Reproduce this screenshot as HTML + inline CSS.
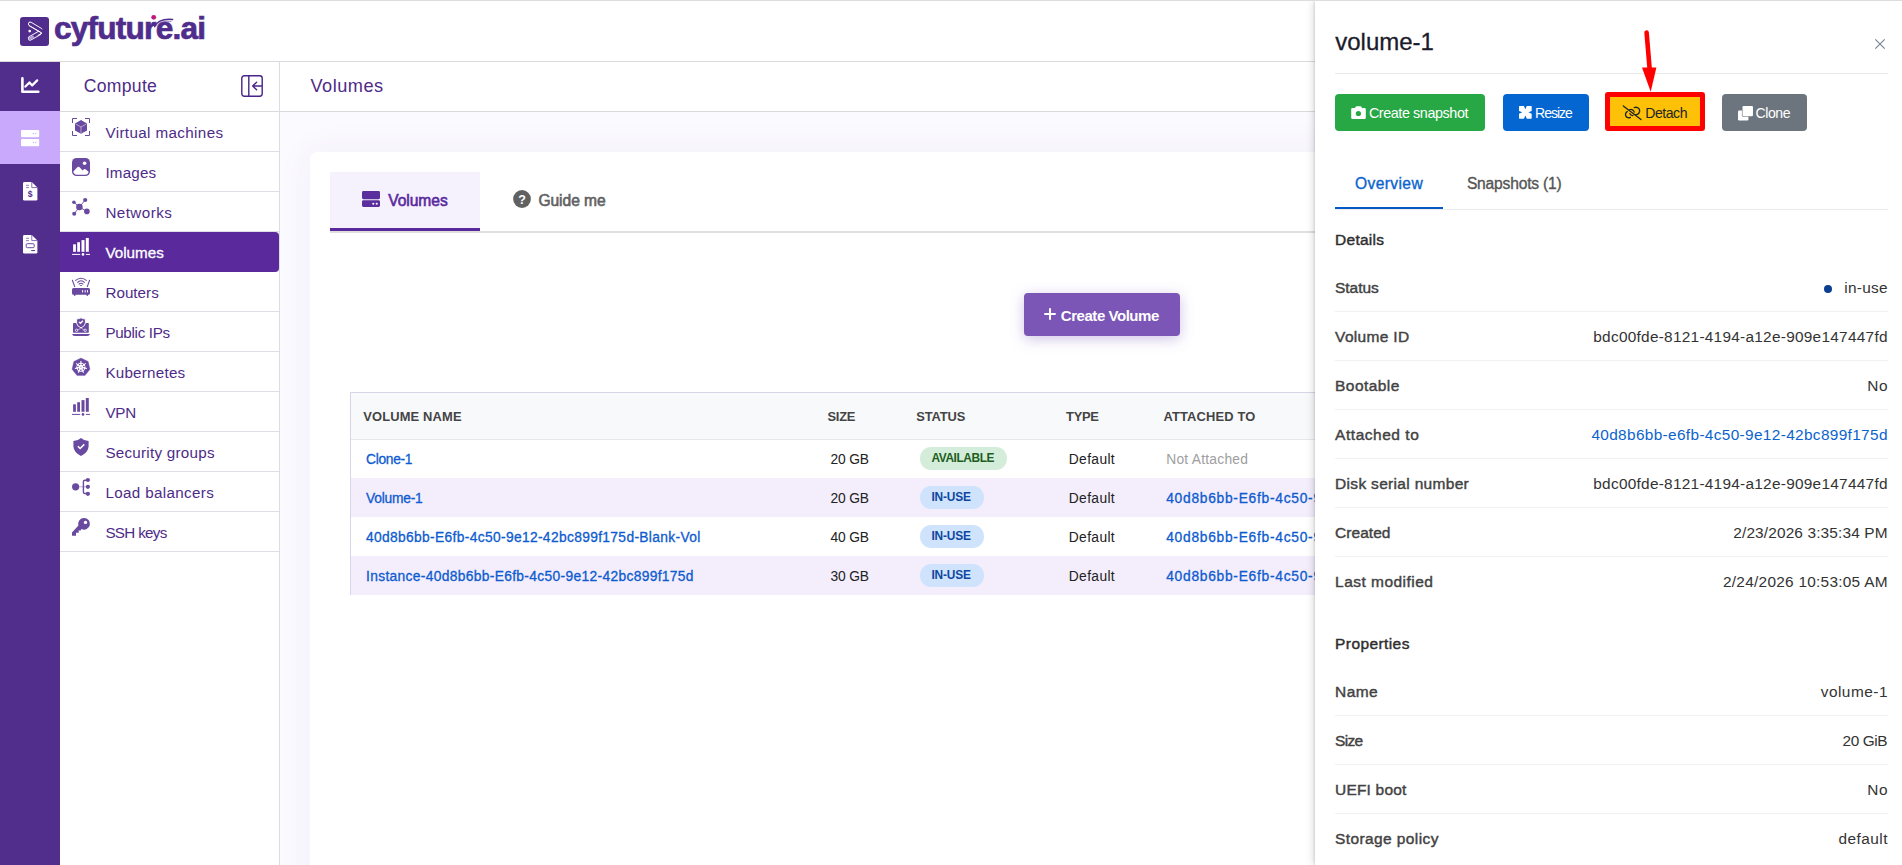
<!DOCTYPE html>
<html lang="en">
<head>
<meta charset="utf-8">
<title>Volumes</title>
<style>
*{box-sizing:border-box;margin:0;padding:0}
html,body{width:1902px;height:865px;overflow:hidden;background:#fff}
body{font-family:"Liberation Sans",sans-serif;color:#222;position:relative}
.a{position:absolute}
.t{position:absolute;white-space:nowrap;line-height:1}
svg{position:absolute;overflow:visible}
#topline{left:0;top:0;width:1902px;height:1px;background:#dcdddc;z-index:5}
#topbar{left:0;top:1px;width:1902px;height:61px;background:#fff;border-bottom:1px solid #d9d9de}
#rail{left:0;top:62px;width:60px;height:803px;background:#512d8c}
#railact{left:0;top:111px;width:60px;height:53px;background:#c9a9fb}
#side{left:60px;top:62px;width:220px;height:803px;background:#fff;border-right:1px solid #dcdce4}
#sidehd{left:60px;top:62px;width:219px;height:50px;border-bottom:1px solid #d9d9de}
.mi{position:absolute;left:60px;width:219px;height:40px;border-bottom:1px solid #dedee8}
.mi.on{background:#5a2a9d;border-bottom:none;border-radius:0 4px 4px 0}
#main{left:280px;top:62px;width:1622px;height:803px;background:#fbfafe}
#mainhd{left:280px;top:62px;width:1622px;height:50px;background:#fff;border-bottom:1px solid #d9d9de}
#card{left:310px;top:152px;width:1592px;height:760px;background:#fff;border-radius:8px 0 0 0;box-shadow:0 0 34px 2px rgba(80,50,150,.05)}
#tabline{left:330px;top:231px;width:1000px;height:2px;background:#dfdfdf}
#tab1{left:330px;top:172px;width:150px;height:59px;background:#f6f2fd;border-bottom:3px solid #5a2a9d}
#cbtn{left:1024px;top:293px;width:156px;height:43px;background:#7b56b6;border-radius:4px;box-shadow:0 3px 14px rgba(123,86,182,.35)}
#tbl{left:350px;top:392px;width:980px;height:203px;border-left:1px solid #d9d4ea;border-top:1px solid #d9d4ea}
#thead{left:351px;top:393px;width:980px;height:46px;background:#f8f9fb}
#thline{left:351px;top:439px;width:980px;height:1px;background:#e6e8ee}
.row{position:absolute;left:351px;width:980px;height:39px}
.row.alt{background:#f3edfc}
.bdg{position:absolute;height:22.4px;border-radius:11.2px}
#panel{left:1315px;top:1px;width:587px;height:864px;background:#fff;box-shadow:-1px 0 2px rgba(0,0,0,.10),-2px 0 8px rgba(0,0,0,.13);clip-path:inset(0 0 0 -14px)}
.hr{position:absolute;left:1335px;width:553px;height:1px;background:#f1f1f1}
.btn{position:absolute;height:37px;border-radius:4px}
</style>
</head>
<body>
<div id="topline" class="a"></div>
<div id="topbar" class="a"></div>

<svg class="a" style="left:20px;top:17px" width="29" height="29" viewBox="0 0 29 29"><rect width="29" height="29" rx="3" fill="#502d8d"/><path d="M10.2 21.3 L19.4 15.9" fill="none" stroke="#fff" stroke-width="4.6" stroke-linecap="round"/><path d="M10.2 21.3 L19.4 15.9" fill="none" stroke="#502d8d" stroke-width="2.9" stroke-linecap="round"/><path d="M10.2 21.3 L12.6 19.9" fill="none" stroke="#b9a0dc" stroke-width="2.8" stroke-linecap="round"/><path d="M10.3 6.9 L20.3 12.9" fill="none" stroke="#fff" stroke-width="4.6" stroke-linecap="round"/><path d="M10.3 6.9 L22.6 14.3" fill="none" stroke="#502d8d" stroke-width="2.9" stroke-linecap="round"/><path d="M9.2 8.8 L21.8 16.2 L18 18.3" fill="none" stroke="#fff" stroke-width=".9" stroke-linecap="round" stroke-linejoin="round"/><circle cx="9.7" cy="14.1" r="1.35" fill="#fff"/></svg><svg class="a" style="left:140px;top:12px" width="30" height="16" viewBox="0 0 30 16"><circle cx="13.7" cy="5.3" r="2.4" fill="#c2187a"/><path d="M14.6 14.6 C17 9.5 23 6.6 32.6 7.4" fill="none" stroke="#502d8d" stroke-width="1.5" stroke-linecap="round"/><path d="M17.5 13 C20 10.2 25 8.6 31 9.4" fill="none" stroke="#8a6bc0" stroke-width=".9" stroke-linecap="round"/></svg>
<span class="t" style="left:53.9px;top:12.7px;font-size:31.6px;font-weight:700;color:#502d8d;letter-spacing:-0.758px;-webkit-text-stroke:.7px #502d8d">cyfuture.ai</span>
<div id="rail" class="a"></div><div id="railact" class="a"></div>
<svg class="a" style="left:14px;top:70px" width="32" height="32" viewBox="0 0 32 32"><path d="M8.4 8.3 V21.8 H24.3" fill="none" stroke="#fff" stroke-width="2.6" stroke-linecap="round" stroke-linejoin="round"/><path d="M11.4 16.6 L15.5 12.4 L18.2 15.4 L23.2 10.4" fill="none" stroke="#fff" stroke-width="2.2" stroke-linecap="round" stroke-linejoin="round"/></svg><svg class="a" style="left:21px;top:130px" width="18.2" height="16.2" viewBox="0 0 18.2 16.2"><rect x="0" y="0" width="18.2" height="7.2" rx="1" fill="#fff"/><rect x="0" y="9" width="18.2" height="7.2" rx="1" fill="#fff"/><circle cx="12.5" cy="3.6" r=".7" fill="#c9a9fb"/><circle cx="14.7" cy="3.6" r=".7" fill="#c9a9fb"/><circle cx="12.5" cy="12.6" r=".7" fill="#c9a9fb"/><circle cx="14.7" cy="12.6" r=".7" fill="#c9a9fb"/></svg><svg class="a" style="left:23px;top:181.8px" width="14.4" height="18.6" viewBox="0 0 14.4 18.6"><path d="M1.4 0 H8.8 L14.4 5.6 V17.2 Q14.4 18.6 13 18.6 H1.4 Q0 18.6 0 17.2 V1.4 Q0 0 1.4 0Z" fill="#fff"/><path d="M8.8 0 V5.6 H14.4" fill="none" stroke="#7b5ab0" stroke-width=".9"/><path d="M3 3.3 H6 M3 5.6 H6" stroke="#7b5ab0" stroke-width=".8"/><text x="7.2" y="15.4" font-family="Liberation Sans, sans-serif" font-weight="700" font-size="8.6" fill="#512d8c" text-anchor="middle">$</text></svg><svg class="a" style="left:23px;top:234.9px" width="14.4" height="18.6" viewBox="0 0 14.4 18.6"><path d="M1.4 0 H8.8 L14.4 5.6 V17.2 Q14.4 18.6 13 18.6 H1.4 Q0 18.6 0 17.2 V1.4 Q0 0 1.4 0Z" fill="#fff"/><path d="M8.8 0 V5.6 H14.4" fill="none" stroke="#7b5ab0" stroke-width=".9"/><path d="M3 3.3 H6 M3 5.6 H6" stroke="#7b5ab0" stroke-width=".8"/><rect x="3.2" y="8.7" width="8" height="4" rx="1" fill="none" stroke="#6a4aa8" stroke-width="1"/><path d="M8.6 15.6 H11.6" stroke="#512d8c" stroke-width="1" stroke-linecap="round"/></svg>
<div id="side" class="a"></div><div id="sidehd" class="a"></div>
<span class="t" style="left:83.8px;top:77.5px;font-size:17.6px;font-weight:400;color:#4e2b88;letter-spacing:0.285px;">Compute</span>
<svg class="a" style="left:241px;top:75px" width="22" height="22" viewBox="0 0 22 22"><rect x=".8" y=".8" width="20.4" height="20.4" rx="2.4" fill="none" stroke="#4a2488" stroke-width="1.4"/><path d="M7.8 .8 V21.2" stroke="#4a2488" stroke-width="1.4"/><path d="M20.6 11 H11.8 M15.6 7.2 L11.7 11 L15.6 14.8" fill="none" stroke="#4a2488" stroke-width="1.4" stroke-linecap="round" stroke-linejoin="round"/></svg>
<div class="mi" style="top:112px"></div>
<svg class="a" style="left:72px;top:118px" width="18" height="18" viewBox="0 0 18 18"><path d="M.5 5 V.5 H5 M13 .5 H17.5 V5 M17.5 13 V17.5 H13 M5 17.5 H.5 V13" fill="none" stroke="#6a4aa0" stroke-width="1"/><path d="M9 2 L15 5.4 V12.4 L9 15.8 L3 12.4 V5.4Z" fill="#6a4aa0"/><path d="M3.6 6 L9 9 L14.4 6 M9 9 V15.2" fill="none" stroke="#fff" stroke-opacity=".55" stroke-width=".9"/></svg>
<span class="t" style="left:105.4px;top:125.1px;font-size:15.2px;font-weight:400;color:#4e2b88;letter-spacing:0.380px;">Virtual machines</span>
<div class="mi" style="top:152px"></div>
<svg class="a" style="left:72px;top:158px" width="18" height="18" viewBox="0 0 18 18"><rect width="18" height="18" rx="4.6" fill="#6a4aa0"/><circle cx="12.6" cy="5.2" r="1.8" fill="#fff"/><path d="M1.3 13.6 L5.6 9.1 Q6.6 8.2 7.6 9.2 L10.6 12.4 L11.9 11.3 Q12.9 10.5 13.9 11.4 L16.6 13.8 Q16.2 16.7 13.2 16.7 H4.8 Q1.7 16.7 1.3 13.6Z" fill="#fff"/></svg>
<span class="t" style="left:105.4px;top:165.1px;font-size:15.2px;font-weight:400;color:#4e2b88;letter-spacing:0.198px;">Images</span>
<div class="mi" style="top:192px"></div>
<svg class="a" style="left:72px;top:198px" width="18" height="18" viewBox="0 0 18 18"><path d="M7.4 9 L13.2 1.9 M7.4 9 L1.9 4.2 M7.4 9 L2.2 15.8 M7.4 9 L14.9 13.4" stroke="#6a4aa0" stroke-width=".9"/><circle cx="7.4" cy="9" r="3.3" fill="#6a4aa0"/><circle cx="13.2" cy="2" r="2.1" fill="#6a4aa0"/><circle cx="1.9" cy="4.2" r="1.8" fill="#6a4aa0"/><circle cx="2.2" cy="15.8" r="2" fill="#6a4aa0"/><circle cx="14.9" cy="13.4" r="2.8" fill="#6a4aa0"/></svg>
<span class="t" style="left:105.4px;top:205.1px;font-size:15.2px;font-weight:400;color:#4e2b88;letter-spacing:0.443px;">Networks</span>
<div class="mi on" style="top:232px"></div>
<svg class="a" style="left:72px;top:238px" width="18" height="18" viewBox="0 0 18 18"><rect x="1.1" y="6.3" width="2.8" height="7.5" fill="#fff"/><rect x="5.2" y="4.2" width="2.8" height="9.6" fill="#fff"/><rect x="9.5" y="2.1" width="3" height="11.7" fill="#fff"/><rect x="13.8" y="0" width="3" height="13.8" fill="#fff"/><path d="M0 16.4 H8.2 M13.9 16.4 H18" stroke="#fff" stroke-width="1"/><circle cx="11" cy="16.4" r="1.3" fill="#fff"/></svg>
<span class="t" style="left:105.4px;top:245.1px;font-size:15.2px;font-weight:400;color:#fff;letter-spacing:0.022px;-webkit-text-stroke:.3px #fff">Volumes</span>
<div class="mi" style="top:272px"></div>
<svg class="a" style="left:72px;top:278px" width="18" height="18" viewBox="0 0 18 18"><path d="M1.5 9.9 H16.5 Q18 9.9 18 11.4 V15.2 Q18 16.7 16.5 16.7 H16.2 L15.6 17.9 H14.8 L14.4 16.7 H3.6 L3.2 17.9 H2.4 L1.8 16.7 H1.5 Q0 16.7 0 15.2 V11.4 Q0 9.9 1.5 9.9Z" fill="#6a4aa0"/><path d="M10.6 12.2 V14.4 M13.2 12.2 V14.4 M15.5 12.2 V14.4" stroke="#fff" stroke-width="1"/><path d="M.4 2.2 L2.7 8.6 M17.6 2.2 L15.3 8.6" stroke="#6a4aa0" stroke-width="1.1" stroke-linecap="round"/><path d="M3.3 2.7 Q9 -2.2 14.7 2.7 M5.3 4.6 Q9 .9 12.7 4.6 M6.7 6.3 Q9 4.3 11.3 6.3" fill="none" stroke="#6a4aa0" stroke-width="1.1"/><ellipse cx="9" cy="7.5" rx="1.1" ry=".6" fill="#6a4aa0"/></svg>
<span class="t" style="left:105.4px;top:285.1px;font-size:15.2px;font-weight:400;color:#4e2b88;letter-spacing:0.035px;">Routers</span>
<div class="mi" style="top:312px"></div>
<svg class="a" style="left:72px;top:318px" width="18" height="18" viewBox="0 0 18 18"><rect x="1" y="5" width="15.8" height="9.7" rx=".6" fill="#6a4aa0"/><path d="M0 15.9 H18 Q17.4 17.9 15.4 17.9 H2.6 Q.6 17.9 0 15.9Z" fill="#6a4aa0"/><path d="M9 -.2 Q11 .9 13.4 1 V5 Q13.2 8.2 9 9.8 Q4.8 8.2 4.6 5 V1 Q7 .9 9 -.2Z" fill="#6a4aa0" stroke="#fff" stroke-width=".9"/><path d="M7 3.9 L8.4 5.3 L10.9 2.7" fill="none" stroke="#fff" stroke-width="1.3"/><path d="M9 9.8 L5.8 12.2 M9 9.8 L12.2 12.2" stroke="#fff" stroke-width=".7" stroke-opacity=".8"/><circle cx="4.6" cy="12.3" r="1.2" fill="none" stroke="#fff" stroke-width=".8"/><circle cx="13.2" cy="12.3" r="1.2" fill="none" stroke="#fff" stroke-width=".8"/></svg>
<span class="t" style="left:105.4px;top:325.1px;font-size:15.2px;font-weight:400;color:#4e2b88;letter-spacing:-0.303px;">Public IPs</span>
<div class="mi" style="top:352px"></div>
<svg class="a" style="left:72px;top:358px" width="18" height="18" viewBox="0 0 18 18"><path d="M9 0 L16.2 3.5 L18 11.3 L13 17.6 H5 L0 11.3 L1.8 3.5Z" fill="#6a4aa0" stroke="#6a4aa0" stroke-width=".3" stroke-linejoin="round"/><circle cx="8.9" cy="9.2" r="4.5" fill="#fff"/><path d="M8.90 6.20 L8.90 3.10 M11.25 7.33 L13.67 5.40 M11.82 9.87 L14.85 10.56 M10.20 11.90 L11.55 14.70 M7.60 11.90 L6.25 14.70 M5.98 9.87 L2.95 10.56 M6.55 7.33 L4.13 5.40 " stroke="#fff" stroke-width="1.1"/><circle cx="8.90" cy="12.25" r=".8" fill="#6a4aa0"/><circle cx="6.52" cy="11.10" r=".8" fill="#6a4aa0"/><circle cx="5.93" cy="8.52" r=".8" fill="#6a4aa0"/><circle cx="7.58" cy="6.45" r=".8" fill="#6a4aa0"/><circle cx="10.22" cy="6.45" r=".8" fill="#6a4aa0"/><circle cx="11.87" cy="8.52" r=".8" fill="#6a4aa0"/><circle cx="11.28" cy="11.10" r=".8" fill="#6a4aa0"/><circle cx="8.9" cy="9.2" r=".7" fill="#6a4aa0" fill-opacity=".45"/></svg>
<span class="t" style="left:105.4px;top:365.1px;font-size:15.2px;font-weight:400;color:#4e2b88;letter-spacing:0.235px;">Kubernetes</span>
<div class="mi" style="top:392px"></div>
<svg class="a" style="left:72px;top:398px" width="18" height="18" viewBox="0 0 18 18"><rect x="1.1" y="6.3" width="2.8" height="7.5" fill="#6a4aa0"/><rect x="5.2" y="4.2" width="2.8" height="9.6" fill="#6a4aa0"/><rect x="9.5" y="2.1" width="3" height="11.7" fill="#6a4aa0"/><rect x="13.8" y="0" width="3" height="13.8" fill="#6a4aa0"/><path d="M0 16.4 H8.2 M13.9 16.4 H18" stroke="#6a4aa0" stroke-width="1"/><circle cx="11" cy="16.4" r="1.3" fill="#6a4aa0"/></svg>
<span class="t" style="left:105.4px;top:405.1px;font-size:15.2px;font-weight:400;color:#4e2b88;letter-spacing:-0.217px;">VPN</span>
<div class="mi" style="top:432px"></div>
<svg class="a" style="left:72px;top:438px" width="18" height="18" viewBox="0 0 18 18"><path d="M9 0 Q11.5 2.3 16.6 3 V8.6 Q16.2 14.6 9 18 Q1.8 14.6 1.4 8.6 V3 Q6.5 2.3 9 0Z" fill="#6a4aa0"/><path d="M5.9 8.3 L8.1 10.5 L12.3 6.4" fill="none" stroke="#fff" stroke-width="1.5"/></svg>
<span class="t" style="left:105.4px;top:445.1px;font-size:15.2px;font-weight:400;color:#4e2b88;letter-spacing:0.255px;">Security groups</span>
<div class="mi" style="top:472px"></div>
<svg class="a" style="left:72px;top:478px" width="18" height="18" viewBox="0 0 18 18"><circle cx="3.6" cy="8.8" r="3.6" fill="#6a4aa0"/><circle cx="15.9" cy="2" r="2.1" fill="#6a4aa0"/><circle cx="15.9" cy="8.8" r="2.1" fill="#6a4aa0"/><circle cx="15.9" cy="15.8" r="2.1" fill="#6a4aa0"/><path d="M15 2.2 H13 Q11.4 2.2 11.4 3.8 V13.9 Q11.4 15.5 13 15.5 H15" fill="none" stroke="#6a4aa0" stroke-width="1.4"/><path d="M7 8.8 H15" stroke="#6a4aa0" stroke-width=".9" stroke-opacity=".5"/></svg>
<span class="t" style="left:105.4px;top:485.1px;font-size:15.2px;font-weight:400;color:#4e2b88;letter-spacing:0.349px;">Load balancers</span>
<div class="mi" style="top:512px"></div>
<svg class="a" style="left:72px;top:518px" width="18" height="18" viewBox="0 0 18 18"><path d="M11.9 0 A5.8 5.8 0 1 1 9.6 11 L8.6 12.6 H6.7 V14.8 H4 V17.8 H0 V14.6 L6.4 7.6 A5.8 5.8 0 0 1 11.9 0Z M13.5 2.7 A1.7 1.7 0 1 0 13.5 6.1 A1.7 1.7 0 1 0 13.5 2.7Z" fill="#6a4aa0" fill-rule="evenodd"/></svg>
<span class="t" style="left:105.4px;top:525.1px;font-size:15.2px;font-weight:400;color:#4e2b88;letter-spacing:-0.670px;">SSH keys</span>
<div id="main" class="a"></div><div id="mainhd" class="a"></div>
<span class="t" style="left:310.5px;top:77.3px;font-size:18.2px;font-weight:400;color:#4e2b88;letter-spacing:0.472px;">Volumes</span>
<div id="card" class="a"></div>
<div id="tabline" class="a"></div><div id="tab1" class="a"></div>
<svg class="a" style="left:362px;top:191px" width="18" height="16" viewBox="0 0 18 16"><rect x="0" y="0" width="18" height="8.2" rx="1.4" fill="#5a2e9c"/><rect x="0" y="9.3" width="18" height="6.6" rx="1.4" fill="#5a2e9c"/><circle cx="11.3" cy="12.7" r="1.05" fill="#fff"/><circle cx="14.7" cy="12.7" r="1.05" fill="#fff"/></svg>
<span class="t" style="left:388.3px;top:192.8px;font-size:15.6px;font-weight:400;color:#5a2a9d;letter-spacing:-0.069px;-webkit-text-stroke:.6px #5a2a9d">Volumes</span>
<svg class="a" style="left:512.5px;top:190px" width="18" height="18" viewBox="0 0 18 18"><circle cx="9" cy="9" r="8.9" fill="#616161"/><text x="9" y="13.5" font-family="Liberation Sans, sans-serif" font-weight="700" font-size="12.5" fill="#fff" text-anchor="middle">?</text></svg>
<span class="t" style="left:538.4px;top:192.8px;font-size:15.6px;font-weight:400;color:#616161;letter-spacing:-0.044px;-webkit-text-stroke:.6px #616161">Guide me</span>
<div id="cbtn" class="a"></div>
<svg class="a" style="left:1044px;top:308.4px" width="12" height="12" viewBox="0 0 12 12"><path d="M6 .3 V11.7 M.3 6 H11.7" stroke="#fff" stroke-width="2"/></svg>
<span class="t" style="left:1060.8px;top:307.6px;font-size:15px;font-weight:700;color:#fff;letter-spacing:-0.453px;">Create Volume</span>
<div id="tbl" class="a"></div><div id="thead" class="a"></div>
<span class="t" style="left:363.2px;top:410.5px;font-size:12.9px;font-weight:700;color:#444;letter-spacing:0.161px;">VOLUME NAME</span>
<span class="t" style="left:827.5px;top:410.5px;font-size:12.9px;font-weight:700;color:#444;letter-spacing:-0.252px;">SIZE</span>
<span class="t" style="left:916.2px;top:410.5px;font-size:12.9px;font-weight:700;color:#444;letter-spacing:-0.111px;">STATUS</span>
<span class="t" style="left:1066.1px;top:410.5px;font-size:12.9px;font-weight:700;color:#444;letter-spacing:-0.291px;">TYPE</span>
<span class="t" style="left:1163.5px;top:410.5px;font-size:12.9px;font-weight:700;color:#444;letter-spacing:0.147px;">ATTACHED TO</span>
<div class="row" style="top:439px"></div>
<span class="t" style="left:366.0px;top:452.5px;font-size:13.8px;font-weight:400;color:#0d5bcf;letter-spacing:-0.305px;-webkit-text-stroke:.3px #0d5bcf">Clone-1</span>
<span class="t" style="left:830.5px;top:452.5px;font-size:13.8px;font-weight:400;color:#222;letter-spacing:-0.156px;">20 GB</span>
<div class="bdg" style="left:920px;top:447.3px;width:87px;background:#d4edda"></div>
<span class="t" style="left:931.5px;top:453.2px;font-size:11.9px;font-weight:700;color:#1b5e20;letter-spacing:-0.410px;">AVAILABLE</span>
<span class="t" style="left:1068.8px;top:452.5px;font-size:13.8px;font-weight:400;color:#222;letter-spacing:0.364px;">Default</span>
<span class="t" style="left:1166.2px;top:452.5px;font-size:13.8px;font-weight:400;color:#9e9e9e;letter-spacing:0.253px;">Not Attached</span>
<div class="row alt" style="top:478px"></div>
<span class="t" style="left:366.0px;top:491.5px;font-size:13.8px;font-weight:400;color:#0d5bcf;letter-spacing:-0.214px;-webkit-text-stroke:.3px #0d5bcf">Volume-1</span>
<span class="t" style="left:830.5px;top:491.5px;font-size:13.8px;font-weight:400;color:#222;letter-spacing:-0.156px;">20 GB</span>
<div class="bdg" style="left:920px;top:486.3px;width:64px;background:#cfe4fc"></div>
<span class="t" style="left:931.5px;top:492.2px;font-size:11.9px;font-weight:700;color:#0d47a1;letter-spacing:-0.183px;">IN-USE</span>
<span class="t" style="left:1068.8px;top:491.5px;font-size:13.8px;font-weight:400;color:#222;letter-spacing:0.364px;">Default</span>
<span class="t" style="left:1166.2px;top:491.5px;font-size:13.8px;font-weight:400;color:#0d5bcf;letter-spacing:0.724px;-webkit-text-stroke:.3px #0d5bcf">40d8b6bb-E6fb-4c50-9e12-42bc899f175d</span>
<div class="row" style="top:517px"></div>
<span class="t" style="left:366.0px;top:530.5px;font-size:13.8px;font-weight:400;color:#0d5bcf;letter-spacing:0.338px;-webkit-text-stroke:.3px #0d5bcf">40d8b6bb-E6fb-4c50-9e12-42bc899f175d-Blank-Vol</span>
<span class="t" style="left:830.5px;top:530.5px;font-size:13.8px;font-weight:400;color:#222;letter-spacing:-0.156px;">40 GB</span>
<div class="bdg" style="left:920px;top:525.3px;width:64px;background:#cfe4fc"></div>
<span class="t" style="left:931.5px;top:531.2px;font-size:11.9px;font-weight:700;color:#0d47a1;letter-spacing:-0.183px;">IN-USE</span>
<span class="t" style="left:1068.8px;top:530.5px;font-size:13.8px;font-weight:400;color:#222;letter-spacing:0.364px;">Default</span>
<span class="t" style="left:1166.2px;top:530.5px;font-size:13.8px;font-weight:400;color:#0d5bcf;letter-spacing:0.724px;-webkit-text-stroke:.3px #0d5bcf">40d8b6bb-E6fb-4c50-9e12-42bc899f175d</span>
<div class="row alt" style="top:556px"></div>
<span class="t" style="left:366.0px;top:569.5px;font-size:13.8px;font-weight:400;color:#0d5bcf;letter-spacing:0.330px;-webkit-text-stroke:.3px #0d5bcf">Instance-40d8b6bb-E6fb-4c50-9e12-42bc899f175d</span>
<span class="t" style="left:830.5px;top:569.5px;font-size:13.8px;font-weight:400;color:#222;letter-spacing:-0.156px;">30 GB</span>
<div class="bdg" style="left:920px;top:564.3px;width:64px;background:#cfe4fc"></div>
<span class="t" style="left:931.5px;top:570.2px;font-size:11.9px;font-weight:700;color:#0d47a1;letter-spacing:-0.183px;">IN-USE</span>
<span class="t" style="left:1068.8px;top:569.5px;font-size:13.8px;font-weight:400;color:#222;letter-spacing:0.364px;">Default</span>
<span class="t" style="left:1166.2px;top:569.5px;font-size:13.8px;font-weight:400;color:#0d5bcf;letter-spacing:0.724px;-webkit-text-stroke:.3px #0d5bcf">40d8b6bb-E6fb-4c50-9e12-42bc899f175d</span>
<div id="thline" class="a"></div>
<div id="panel" class="a"></div>
<span class="t" style="left:1335.3px;top:29.7px;font-size:24px;font-weight:400;color:#1b1b2b;letter-spacing:-0.017px;-webkit-text-stroke:.3px #1b1b2b">volume-1</span>
<svg class="a" style="left:1875px;top:38.6px" width="10" height="10" viewBox="0 0 10 10"><path d="M.3 .3 L9.7 9.7 M9.7 .3 L.3 9.7" stroke="#7a8594" stroke-width="1.2"/></svg>
<div class="hr" style="top:73px;background:#e9e9e9"></div>
<div class="btn" style="left:1335px;top:94px;width:150px;background:#28a745"></div>
<svg class="a" style="left:1351px;top:106px" width="15" height="13" viewBox="0 0 15 13"><path d="M1.4 2 H4 L4.8 .6 Q5.1 .2 5.7 .2 H9.3 Q9.9 .2 10.2 .6 L11 2 H13.6 Q14.8 2 14.8 3.2 V11.8 Q14.8 13 13.6 13 H1.4 Q.2 13 .2 11.8 V3.2 Q.2 2 1.4 2Z M7.4 4.9 A2.6 2.6 0 1 0 7.4 10.1 A2.6 2.6 0 1 0 7.4 4.9Z" fill="#fff" fill-rule="evenodd"/></svg>
<span class="t" style="left:1368.9px;top:106.1px;font-size:14.4px;font-weight:400;color:#fff;letter-spacing:-0.429px;">Create snapshot</span>
<div class="btn" style="left:1503px;top:94px;width:86px;background:#0466d1"></div>
<svg class="a" style="left:1519px;top:106.3px" width="12.7" height="12.7" viewBox="0 0 12.7 12.7"><path d="M.6 0 H4.9 L6.35 3.3 L7.8 0 H12.1 Q12.7 0 12.7 .6 V4.9 L9.4 6.35 L12.7 7.8 V12.1 Q12.7 12.7 12.1 12.7 H7.8 L6.35 9.4 L4.9 12.7 H.6 Q0 12.7 0 12.1 V7.8 L3.3 6.35 L0 4.9 V.6 Q0 0 .6 0Z" fill="#fff"/></svg>
<span class="t" style="left:1535.1px;top:106.4px;font-size:14px;font-weight:400;color:#fff;letter-spacing:-1.019px;">Resize</span>
<div class="a" style="left:1605px;top:92px;width:100px;height:39px;border:5px solid #ff0000;border-radius:3px;background:#ffc107"></div>
<svg class="a" style="left:1622px;top:104px" width="20" height="17" viewBox="0 0 20 17"><path d="M1.3 2 L19 15.6" stroke="#212529" stroke-width="1.3" stroke-linecap="round"/><path d="M5.2 7.6 A3.3 3.3 0 1 0 8.4 13.4" fill="none" stroke="#212529" stroke-width="1.4" stroke-linecap="round"/><path d="M12.3 3.6 A3.7 3.7 0 1 1 13.6 10.6" fill="none" stroke="#212529" stroke-width="1.4" stroke-linecap="round"/><path d="M7.6 5.8 A3.2 3.2 0 0 1 12.2 8.2 M11 11.6 A3.2 3.2 0 0 1 7.8 9.6" fill="none" stroke="#212529" stroke-width="1.3" stroke-linecap="round"/></svg>
<span class="t" style="left:1645.2px;top:106.4px;font-size:14.1px;font-weight:400;color:#212529;letter-spacing:-0.471px;">Detach</span>
<div class="btn" style="left:1722px;top:94px;width:85px;background:#6c757d"></div>
<svg class="a" style="left:1737.5px;top:105.5px" width="15" height="14.5" viewBox="0 0 15 14.5"><rect x="0" y="4.5" width="10.4" height="10" rx="1.2" fill="#fff"/><rect x="3.9" y="-.6" width="11.7" height="11.4" rx="1.6" fill="#6c757d"/><rect x="4.5" y="0" width="10.5" height="10.2" rx="1.2" fill="#fff"/></svg>
<span class="t" style="left:1755.5px;top:106.4px;font-size:14.1px;font-weight:400;color:#fff;letter-spacing:-0.457px;">Clone</span>
<svg class="a" style="left:1636px;top:26px" width="30" height="70" viewBox="0 0 30 70"><path d="M10.6 6.6 L13.9 46" stroke="#ff0000" stroke-width="4.6" stroke-linecap="round"/><path d="M6 41.4 L20.4 41.4 L14.7 65.8Z" fill="#ff0000"/></svg>
<div class="hr" style="top:209px;background:#ececec"></div>
<div class="a" style="left:1335px;top:207px;width:108px;height:2px;background:#0558c8"></div>
<span class="t" style="left:1355.0px;top:175.6px;font-size:15.6px;font-weight:400;color:#0b63ce;letter-spacing:0.386px;-webkit-text-stroke:.35px #0b63ce">Overview</span>
<span class="t" style="left:1466.9px;top:175.6px;font-size:15.6px;font-weight:400;color:#555;letter-spacing:-0.183px;-webkit-text-stroke:.35px #555">Snapshots (1)</span>
<span class="t" style="left:1335.1px;top:231.6px;font-size:15.5px;font-weight:400;color:#2d2d2d;letter-spacing:0.235px;-webkit-text-stroke:.42px #2d2d2d">Details</span>
<span class="t" style="left:1335.1px;top:279.8px;font-size:15.5px;font-weight:400;color:#424242;letter-spacing:-0.071px;-webkit-text-stroke:.42px #424242">Status</span>
<span class="t" style="left:1844.3px;top:279.9px;font-size:15.4px;font-weight:400;color:#333;letter-spacing:0.256px;">in-use</span>
<div class="hr" style="top:311px"></div>
<span class="t" style="left:1335.1px;top:328.8px;font-size:15.5px;font-weight:400;color:#424242;letter-spacing:0.323px;-webkit-text-stroke:.42px #424242">Volume ID</span>
<span class="t" style="left:1593.3px;top:328.9px;font-size:15.4px;font-weight:400;color:#333;letter-spacing:0.263px;">bdc00fde-8121-4194-a12e-909e147447fd</span>
<div class="hr" style="top:360px"></div>
<span class="t" style="left:1335.1px;top:377.8px;font-size:15.5px;font-weight:400;color:#424242;letter-spacing:0.428px;-webkit-text-stroke:.42px #424242">Bootable</span>
<span class="t" style="left:1867.2px;top:377.9px;font-size:15.4px;font-weight:400;color:#333;letter-spacing:0.612px;">No</span>
<div class="hr" style="top:409px"></div>
<span class="t" style="left:1335.1px;top:426.8px;font-size:15.5px;font-weight:400;color:#424242;letter-spacing:0.528px;-webkit-text-stroke:.42px #424242">Attached to</span>
<span class="t" style="left:1591.4px;top:426.9px;font-size:15.4px;font-weight:400;color:#0b63ce;letter-spacing:0.342px;">40d8b6bb-e6fb-4c50-9e12-42bc899f175d</span>
<div class="hr" style="top:458px"></div>
<span class="t" style="left:1335.1px;top:475.8px;font-size:15.5px;font-weight:400;color:#424242;letter-spacing:0.314px;-webkit-text-stroke:.42px #424242">Disk serial number</span>
<span class="t" style="left:1593.3px;top:475.9px;font-size:15.4px;font-weight:400;color:#333;letter-spacing:0.263px;">bdc00fde-8121-4194-a12e-909e147447fd</span>
<div class="hr" style="top:507px"></div>
<span class="t" style="left:1335.1px;top:524.8px;font-size:15.5px;font-weight:400;color:#424242;letter-spacing:0.041px;-webkit-text-stroke:.42px #424242">Created</span>
<span class="t" style="left:1733.3px;top:524.9px;font-size:15.4px;font-weight:400;color:#333;letter-spacing:0.144px;">2/23/2026 3:35:34 PM</span>
<div class="hr" style="top:556px"></div>
<span class="t" style="left:1335.1px;top:573.8px;font-size:15.5px;font-weight:400;color:#424242;letter-spacing:0.466px;-webkit-text-stroke:.42px #424242">Last modified</span>
<span class="t" style="left:1723.0px;top:573.9px;font-size:15.4px;font-weight:400;color:#333;letter-spacing:0.266px;">2/24/2026 10:53:05 AM</span>
<div class="a" style="left:1824px;top:285px;width:8px;height:8px;border-radius:50%;background:#0d3f91"></div>
<span class="t" style="left:1335.1px;top:636.4px;font-size:15.5px;font-weight:400;color:#2d2d2d;letter-spacing:0.405px;-webkit-text-stroke:.42px #2d2d2d">Properties</span>
<span class="t" style="left:1335.1px;top:683.9px;font-size:15.5px;font-weight:400;color:#424242;letter-spacing:0.414px;-webkit-text-stroke:.42px #424242">Name</span>
<span class="t" style="left:1820.7px;top:684.0px;font-size:15.4px;font-weight:400;color:#333;letter-spacing:0.498px;">volume-1</span>
<div class="hr" style="top:715px"></div>
<span class="t" style="left:1335.1px;top:732.9px;font-size:15.5px;font-weight:400;color:#424242;letter-spacing:-0.685px;-webkit-text-stroke:.42px #424242">Size</span>
<span class="t" style="left:1842.5px;top:733.0px;font-size:15.4px;font-weight:400;color:#333;letter-spacing:-0.412px;">20 GiB</span>
<div class="hr" style="top:764px"></div>
<span class="t" style="left:1335.1px;top:781.9px;font-size:15.5px;font-weight:400;color:#424242;letter-spacing:0.177px;-webkit-text-stroke:.42px #424242">UEFI boot</span>
<span class="t" style="left:1867.2px;top:782.0px;font-size:15.4px;font-weight:400;color:#333;letter-spacing:0.612px;">No</span>
<div class="hr" style="top:813px"></div>
<span class="t" style="left:1335.1px;top:830.9px;font-size:15.5px;font-weight:400;color:#424242;letter-spacing:0.390px;-webkit-text-stroke:.42px #424242">Storage policy</span>
<span class="t" style="left:1838.5px;top:831.0px;font-size:15.4px;font-weight:400;color:#333;letter-spacing:0.464px;">default</span>
</body>
</html>
